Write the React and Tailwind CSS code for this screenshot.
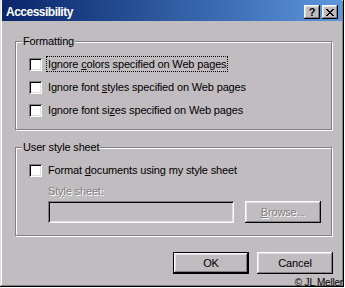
import React from "react";

// Win98 style bevels
const raised =
  "shadow-[inset_-1px_-1px_#000,inset_1px_1px_#fff,inset_-2px_-2px_#808080,inset_2px_2px_#dfdfdf]";
const sunken =
  "shadow-[inset_1px_1px_#808080,inset_-1px_-1px_#fff,inset_2px_2px_#000,inset_-2px_-2px_#dfdfdf]";

function Checkbox() {
  return <span className={"w-[13px] h-[13px] shrink-0 bg-white " + sunken} />;
}

function CheckRow({ children, focused }) {
  return (
    <div className="flex items-center h-[16px]">
      <Checkbox />
      <span
        className={
          "ml-[4px] px-[1px] h-[16px] leading-[14px] border border-dotted " +
          (focused ? "border-black" : "border-transparent")
        }
      >
        {children}
      </span>
    </div>
  );
}

function Group({ label, children }) {
  return (
    <div className="relative w-[317px] h-[89px] border border-[#808080] shadow-[inset_1px_1px_#fff,1px_1px_#fff]">
      <span className="absolute left-[6px] top-[-7px] bg-[#c0bcc0] px-[1px] leading-[13px]">
        {label}
      </span>
      <div className="pt-[14px] pl-[13px]">{children}</div>
    </div>
  );
}

export default function App() {
  return (
    <div className="w-[345px] h-[288px] bg-white font-['Liberation_Sans',Arial,sans-serif] text-[11px] tracking-[-0.15px] text-black">
      <div
        className={
          "relative w-[344px] h-[287px] bg-[#c0bcc0] flex flex-col " +
          "shadow-[inset_-1px_-1px_#000,inset_1px_1px_#dfdfdf,inset_-2px_-2px_#808080,inset_2px_2px_#fff]"
        }
      >
        {/* title bar */}
        <div className="mx-[2px] h-[21px] bg-linear-to-r from-[#0a246a] to-[#5d97dd] flex items-center pl-[4px] pr-[4px] pt-[3px]">
          <span className="text-white font-bold text-[12px] tracking-[-0.5px] leading-[13px]">Accessibility</span>
          <div className="ml-auto flex gap-[2px]">
            <div className={"w-[16px] h-[14px] bg-[#c0bcc0] flex items-center justify-center " + raised}>
              <span className="font-bold text-[11px] leading-[11px] tracking-normal">?</span>
            </div>
            <div className={"w-[16px] h-[14px] bg-[#c0bcc0] flex items-center justify-center " + raised}>
              <svg width="8" height="7" viewBox="0 0 8 7" shapeRendering="crispEdges">
                <path
                  d="M0 0h2v1H0zM6 0h2v1H6zM1 1h2v1H1zM5 1h2v1H5zM2 2h4v1H2zM3 3h2v1H3zM2 4h4v1H2zM1 5h2v1H1zM5 5h2v1H5zM0 6h2v1H0zM6 6h2v1H6z"
                  fill="#000"
                />
              </svg>
            </div>
          </div>
        </div>

        <div className="pl-[15px] pt-[20px]">
          <Group label="Formatting">
            <div className="flex flex-col gap-[7px]">
              <CheckRow focused>
                Ignore <u>c</u>olors specified on Web pages
              </CheckRow>
              <CheckRow>
                Ignore font <u>s</u>tyles specified on Web pages
              </CheckRow>
              <CheckRow>
                Ignore font si<u>z</u>es specified on Web pages
              </CheckRow>
            </div>
          </Group>

          <div className="mt-[17px]">
            <Group label="User style sheet">
              <CheckRow>
                Format <u>d</u>ocuments using my style sheet
              </CheckRow>
              <div className="ml-[19px] mt-[7px] leading-[13px] text-[#808080] [text-shadow:1px_1px_0_#fff]">
                St<u>y</u>le sheet:
              </div>
              <div className="ml-[19px] mt-[3px] flex">
                <div className={"w-[186px] h-[22px] bg-[#c0bcc0] " + sunken} />
                <div
                  className={
                    "ml-[11px] w-[76px] h-[22px] flex items-center justify-center text-[#808080] [text-shadow:1px_1px_0_#fff] " +
                    raised
                  }
                >
                  <span>
                    <u>B</u>rowse...
                  </span>
                </div>
              </div>
            </Group>
          </div>

          <div className="mt-[16px] w-[318px] flex justify-end gap-[8px]">
            <div className="w-[76px] h-[22px] border border-black">
              <div className={"w-full h-full flex items-center justify-center " + raised}>OK</div>
            </div>
            <div className={"w-[76px] h-[22px] flex items-center justify-center " + raised}>Cancel</div>
          </div>
        </div>

        <span className="absolute right-[1px] bottom-[-1px] text-[10px] leading-[11px] tracking-[-0.2px] text-black">
          © JL Meller
        </span>
      </div>
    </div>
  );
}
